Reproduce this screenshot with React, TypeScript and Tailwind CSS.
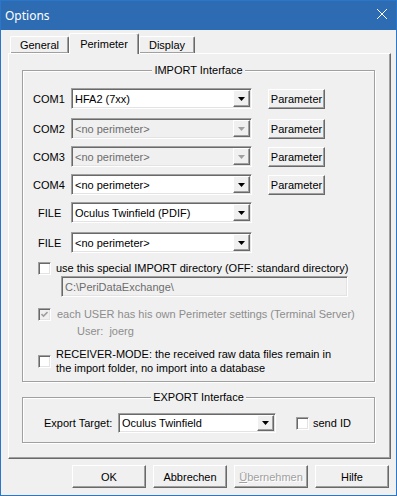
import React from "react";

const raised =
  "border border-t-white border-l-white border-r-[#696969] border-b-[#696969] shadow-[inset_-1px_-1px_0_#a0a0a0]";
const sunken =
  "border border-t-[#a0a0a0] border-l-[#a0a0a0] border-r-white border-b-white shadow-[inset_1px_1px_0_#696969,inset_-1px_-1px_0_#e3e3e3]";
const etched =
  "border border-[#a0a0a0] shadow-[inset_1px_1px_0_#fff,1px_1px_0_#fff]";

function Arrow({ disabled }: { disabled?: boolean }) {
  return (
    <svg width="7" height="4" viewBox="0 0 7 4">
      <polygon points="0,0 7,0 3.5,4" fill={disabled ? "#a0a0a0" : "#000"} />
    </svg>
  );
}

function Combo({
  value,
  disabled,
  width,
  height = "h-[21px]",
}: {
  value: string;
  disabled?: boolean;
  width: string;
  height?: string;
}) {
  return (
    <div
      className={`flex p-[1px] ${width} ${height} ${sunken} ${
        disabled ? "bg-[#f0f0f0]" : "bg-white"
      }`}
    >
      <div
        className={`flex flex-1 items-center pl-[2px] ${
          disabled ? "text-[#6d6d6d]" : "text-black"
        }`}
      >
        {value}
      </div>
      <div
        className={`flex w-[17px] items-center justify-center bg-[#f0f0f0] ${raised}`}
      >
        <Arrow disabled={disabled} />
      </div>
    </div>
  );
}

function Checkbox({ checked, disabled }: { checked?: boolean; disabled?: boolean }) {
  return (
    <div
      className={`flex h-[13px] w-[13px] shrink-0 items-center justify-center ${sunken} ${
        disabled ? "bg-[#f0f0f0]" : "bg-white"
      }`}
    >
      {checked && (
        <svg width="7" height="7" viewBox="0 0 7 7">
          <path
            d="M0.5 3 L2.5 5 L6.5 1"
            stroke={disabled ? "#a0a0a0" : "#000"}
            strokeWidth="1.6"
            fill="none"
          />
        </svg>
      )}
    </div>
  );
}

function Button({
  children,
  className,
}: {
  children: React.ReactNode;
  className: string;
}) {
  return (
    <button
      type="button"
      className={`flex items-center justify-center bg-[#f0f0f0] ${raised} ${className}`}
    >
      {children}
    </button>
  );
}

const comRows = [
  { label: "COM1", value: "HFA2 (7xx)", disabled: false, mt: "mt-0" },
  { label: "COM2", value: "<no perimeter>", disabled: true, mt: "mt-[9px]" },
  { label: "COM3", value: "<no perimeter>", disabled: true, mt: "mt-[7px]" },
  { label: "COM4", value: "<no perimeter>", disabled: false, mt: "mt-[7px]" },
];

export default function App() {
  return (
    <div className="flex h-[496px] w-[397px] flex-col border border-[#2a77c9] bg-[#f0f0f0] font-['Liberation_Sans',Arial,sans-serif] text-[11px] leading-[14px] text-black">
      {/* Title bar */}
      <div className="flex h-[29px] shrink-0 items-center justify-between bg-[#2d6cb3] pl-[4px] pr-[9px]">
        <span className="font-['Noto_Sans',sans-serif] text-[12px] text-white">Options</span>
        <svg width="10" height="10" viewBox="0 0 10 10" className="mb-[3px]">
          <path d="M0 0 L10 10 M10 0 L0 10" stroke="#fff" strokeWidth="1" />
        </svg>
      </div>

      {/* Tabs */}
      <div className="ml-[9px] mt-[3px] flex h-[20px] items-end">
        <div
          className={`flex h-[17px] w-[59px] items-center justify-center rounded-t-[2px] border-b-0 ${raised}`}
        >
          General
        </div>
        <div className="relative z-10 -mb-[1px] flex h-[21px] w-[70px] items-start justify-center rounded-t-[2px] border border-b-0 border-t-white border-l-white border-r-[#696969] bg-[#f0f0f0] pt-[3px] shadow-[inset_-1px_0_0_#a0a0a0]">
          Perimeter
        </div>
        <div
          className={`flex h-[17px] w-[56px] items-center justify-center rounded-t-[2px] border-b-0 ${raised}`}
        >
          Display
        </div>
      </div>

      {/* Tab panel */}
      <div
        className={`ml-[7px] mr-[5px] h-[406px] shrink-0 pl-[13px] pt-[10px] ${raised}`}
      >
        <fieldset className={`w-[353px] pb-[6px] pt-[11px] ${etched}`}>
          <legend className="mx-auto bg-[#f0f0f0] px-[2px] leading-[13px]">IMPORT Interface</legend>

          {comRows.map((r) => (
            <div key={r.label} className={`flex items-center pl-[10px] ${r.mt}`}>
              <span className="w-[38px]">{r.label}</span>
              <Combo value={r.value} disabled={r.disabled} width="w-[181px]" />
              <Button className="ml-[16px] h-[20px] w-[57px]">Parameter</Button>
            </div>
          ))}

          <div className="mt-[7px] flex items-center pl-[15px]">
            <span className="w-[33px]">FILE</span>
            <Combo value="Oculus Twinfield (PDIF)" width="w-[181px]" />
          </div>
          <div className="mt-[9px] flex items-center pl-[15px]">
            <span className="w-[33px]">FILE</span>
            <Combo value="<no perimeter>" width="w-[181px]" />
          </div>

          <div className="mt-[8px] flex items-center gap-[5px] pl-[15px]">
            <Checkbox />
            <span>use this special IMPORT directory (OFF: standard directory)</span>
          </div>
          <div
            className={`ml-[38px] mt-[1px] flex h-[21px] w-[287px] items-center bg-[#f0f0f0] pl-[3px] text-[#6d6d6d] ${sunken}`}
          >
            C:\PeriDataExchange\
          </div>

          <div className="mt-[10px] flex items-center gap-[6px] pl-[15px] text-[#8d8d8d]">
            <Checkbox checked disabled />
            <span>each USER has his own Perimeter settings (Terminal Server)</span>
          </div>
          <div className="mt-[3px] pl-[54px] text-[#8d8d8d]">User:&nbsp; joerg</div>

          <div className="mt-[9px] flex items-center gap-[5px] pl-[15px]">
            <Checkbox />
            <span>
              RECEIVER-MODE: the received raw data files remain in
              <br />
              the import folder, no import into a database
            </span>
          </div>
        </fieldset>

        <fieldset className={`mt-[9px] w-[353px] pb-[9px] pt-[9px] ${etched}`}>
          <legend className="mx-auto bg-[#f0f0f0] px-[2px] leading-[13px]">EXPORT Interface</legend>
          <div className="flex items-center pl-[21px]">
            <span className="w-[74px]">Export Target:</span>
            <Combo value="Oculus Twinfield" width="w-[158px]" height="h-[20px]" />
            <div className="ml-[20px] flex items-center gap-[4px]">
              <Checkbox />
              <span>send ID</span>
            </div>
          </div>
        </fieldset>
      </div>

      {/* Buttons */}
      <div className="mt-[6px] flex justify-end gap-[7px] pr-[7px]">
        <Button className="h-[23px] w-[74px]">OK</Button>
        <Button className="h-[23px] w-[74px]">Abbrechen</Button>
        <Button className="h-[23px] w-[74px] text-[#a0a0a0] [text-shadow:1px_1px_0_#fff]">
          <span>
            <span className="underline">Ü</span>bernehmen
          </span>
        </Button>
        <Button className="h-[23px] w-[74px]">Hilfe</Button>
      </div>
    </div>
  );
}
